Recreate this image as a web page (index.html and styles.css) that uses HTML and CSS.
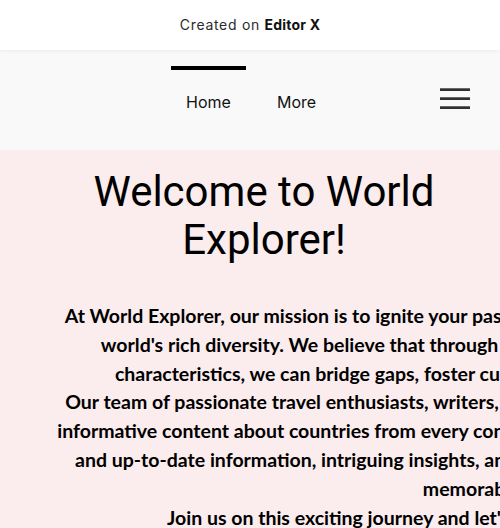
FILE: index.html
```html
<!DOCTYPE html>
<html lang="en">
<head>
<meta charset="utf-8">
<title>World Explorer</title>
<link rel="stylesheet" href="styles.css">
</head>
<body>
<div class="topbar">
  <span class="created">Created on <b>Editor X</b></span>
</div>
<header class="nav">
  <nav class="menu">
    <a class="menu-item active" href="#">Home</a>
    <a class="menu-item" href="#">More</a>
  </nav>
  <button class="burger" aria-label="Open menu">
    <span></span><span></span><span></span>
  </button>
</header>
<main class="content">
  <h1 class="title">Welcome to World<br>Explorer!</h1>
  <p class="intro">At World Explorer, our mission is to ignite your passion for exploration and deepen your knowledge of the<br>world's rich diversity. We believe that through learning about different countries and their unique<br>characteristics, we can bridge gaps, foster cultural understanding, and promote global respect.<br>Our team of passionate travel enthusiasts, writers, and researchers is dedicated to providing you with rich<br>informative content about countries from every continent. Whether you're a keen traveler seeking accurate<br>and up-to-date information, intriguing insights, and practical tips, we are here to help make your travels<br>memorable and lovely.<br>Join us on this exciting journey and let's explore the world together, one at a time!</p>
</main>
</body>
</html>
```

FILE: styles.css
```css
html, body {
  margin: 0;
  padding: 0;
  overflow: hidden;
}
body {
  width: 500px;
  height: 528px;
  background: #fbeced;
}
.topbar {
  height: 50px;
  background: #ffffff;
  display: flex;
  align-items: center;
  justify-content: center;
  position: relative;
  z-index: 1;
  box-shadow: 0 1px 4px rgba(0, 0, 0, 0.06);
}
.created {
  font-family: "Inter", "Liberation Sans", sans-serif;
  font-size: 14px;
  letter-spacing: 0.7px;
  color: #2b2b2b;
  margin-top: -2px;
}
.created b {
  font-weight: 700;
  letter-spacing: 0.2px;
  color: #111;
}
.nav {
  height: 100px;
  background: #f9f9f9;
  display: flex;
  align-items: flex-start;
}
.menu {
  display: flex;
  margin-left: 171px;
}
.menu-item {
  font-family: "Inter", "Liberation Sans", sans-serif;
  font-size: 16px;
  line-height: 20px;
  color: #111;
  text-decoration: none;
  padding: 22px 13px 0;
  border-top: 4px solid transparent;
  margin-top: 16px;
  width: 49px;
  text-align: center;
}
.menu-item + .menu-item {
  margin-left: 13px;
}
.menu-item.active {
  border-top-color: #000;
}
.burger {
  margin: 38px 30px 0 auto;
  width: 30px;
  height: 21px;
  padding: 0;
  border: 0;
  background: transparent;
  display: flex;
  flex-direction: column;
  justify-content: space-between;
}
.burger span {
  display: block;
  background: #303030;
  border-top: 1px solid #6a6a6a;
  box-sizing: border-box;
  height: 3px;
}
.content {
  padding-top: 18px;
}
.title {
  font-family: "Roboto", "Liberation Sans", sans-serif;
  font-weight: 400;
  font-size: 42px;
  line-height: 48px;
  color: #000;
  text-align: center;
  width: 440px;
  margin: 0 0 0 44px;
}
.intro {
  font-family: "Lato", "Liberation Sans", sans-serif;
  font-weight: 700;
  font-size: 19.5px;
  line-height: 28.8px;
  color: #000;
  text-align: center;
  white-space: nowrap;
  width: 1040px;
  margin: 38px 0 0 0;
}
```
